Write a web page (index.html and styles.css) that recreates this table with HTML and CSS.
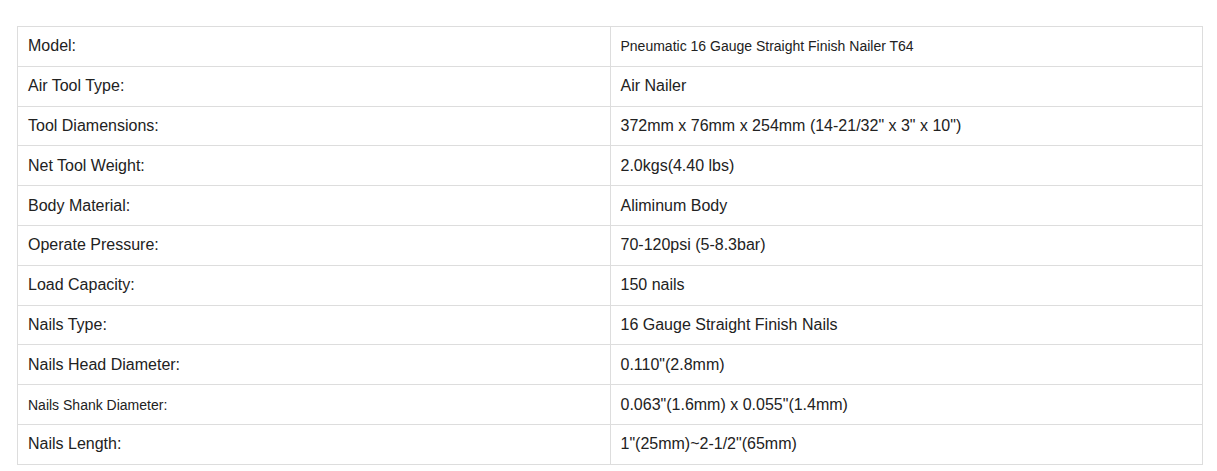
FILE: index.html
```html
<!DOCTYPE html>
<html>
<head>
<meta charset="utf-8">
<link rel="stylesheet" href="styles.css">
</head>
<body>
<div class="wrap">
<table class="specs">
<tbody>
<tr><td>Model:</td><td class="small">Pneumatic 16 Gauge Straight Finish Nailer T64</td></tr>
<tr><td>Air Tool Type:</td><td>Air Nailer</td></tr>
<tr><td>Tool Diamensions:</td><td>372mm x 76mm x 254mm (14-21/32" x 3" x 10")</td></tr>
<tr><td>Net Tool Weight:</td><td>2.0kgs(4.40 lbs)</td></tr>
<tr><td>Body Material:</td><td>Aliminum Body</td></tr>
<tr><td>Operate Pressure:</td><td>70-120psi (5-8.3bar)</td></tr>
<tr><td>Load Capacity:</td><td>150 nails</td></tr>
<tr><td>Nails Type:</td><td>16 Gauge Straight Finish Nails</td></tr>
<tr><td>Nails Head Diameter:</td><td>0.110"(2.8mm)</td></tr>
<tr><td class="small">Nails Shank Diameter:</td><td>0.063"(1.6mm) x 0.055"(1.4mm)</td></tr>
<tr><td>Nails Length:</td><td>1"(25mm)~2-1/2"(65mm)</td></tr>
</tbody>
</table>
</div>
</body>
</html>
```
FILE: styles.css
```css
html, body {
  margin: 0;
  padding: 0;
  background: #fff;
}
.wrap {
  padding: 26px 14px 0 17px;
}
.specs {
  width: 1186px;
  border-collapse: collapse;
  table-layout: fixed;
  font-family: Arial, "Liberation Sans", sans-serif;
  font-size: 16px;
  color: #222;
}
.specs td {
  border: 1px solid #dddddd;
  padding: 0 10px;
  height: 38.8px;
  vertical-align: middle;
  width: 50%;
}
.specs td.small {
  font-size: 14px;
}
```
